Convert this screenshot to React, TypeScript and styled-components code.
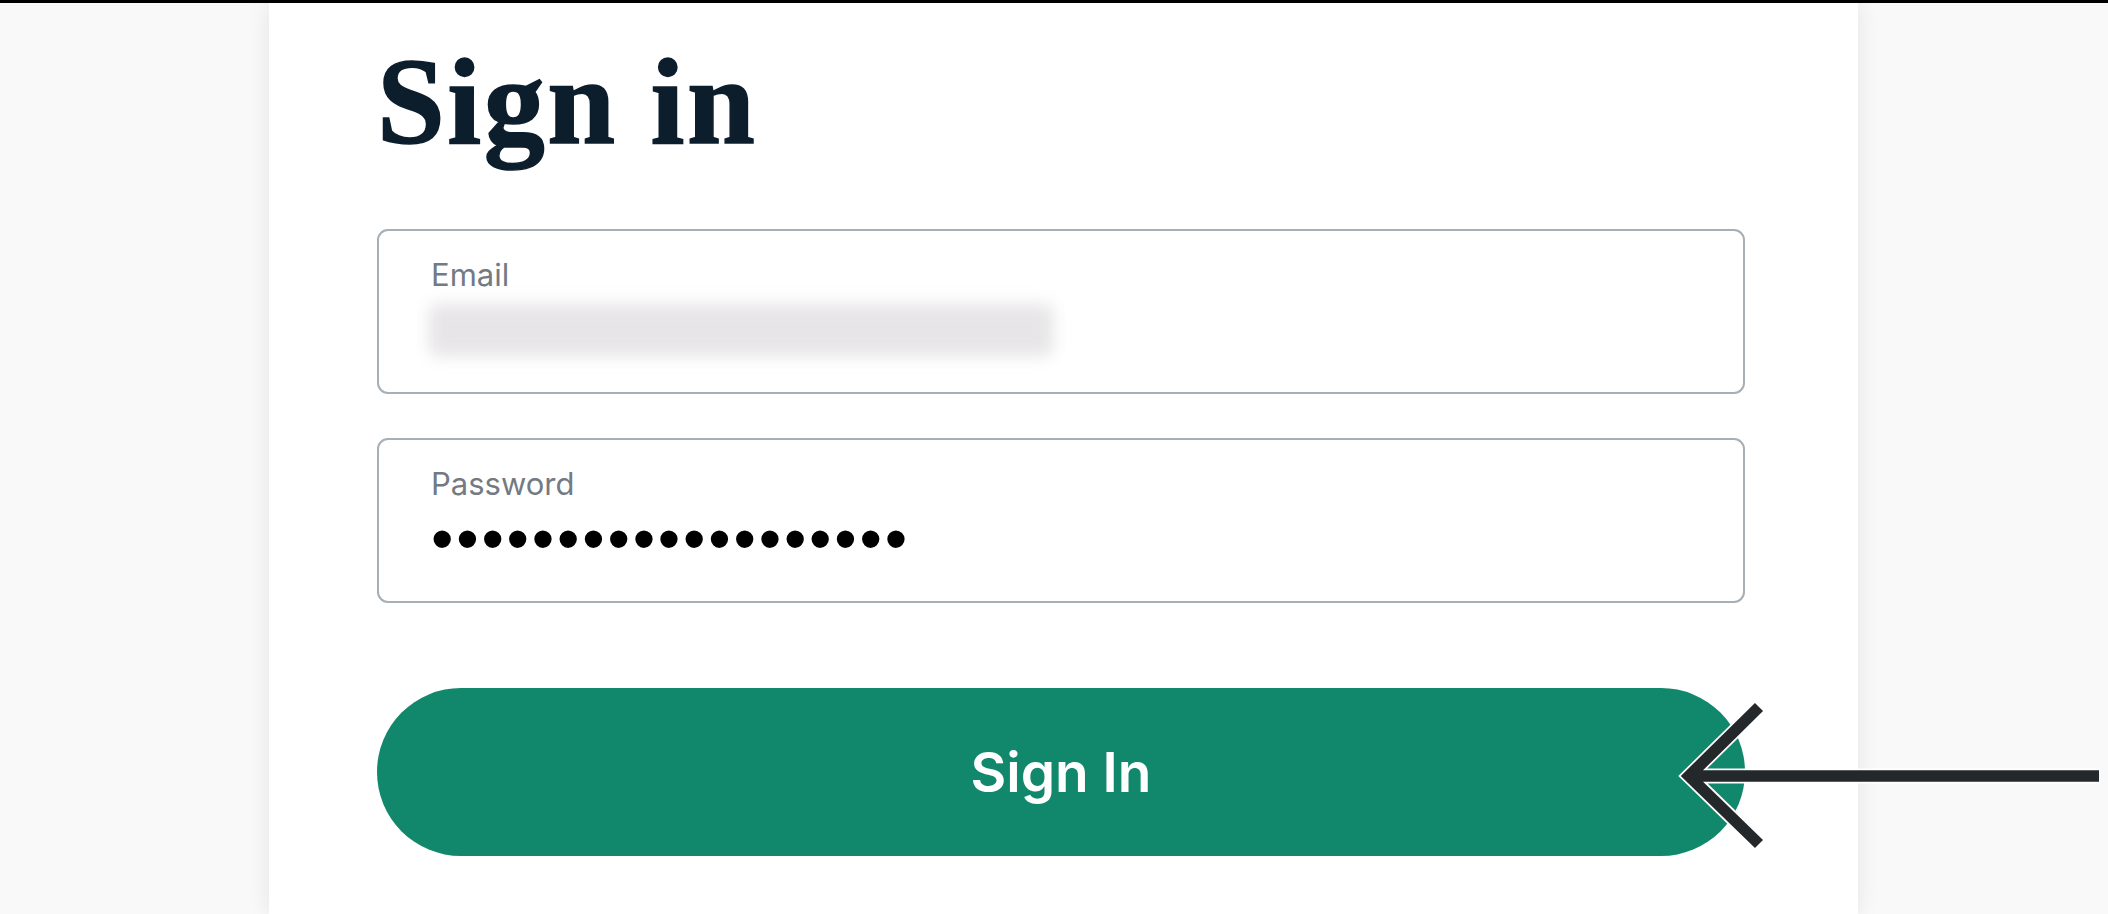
import React from "react";
import styled, { createGlobalStyle } from "styled-components";

const GlobalStyle = createGlobalStyle`
  html, body, #root {
    margin: 0;
    padding: 0;
    height: 100%;
  }
  body {
    background: #f9f9f9;
    font-family: Inter, "Noto Sans", sans-serif;
    overflow: hidden;
  }
`;

const Page = styled.div`
  position: relative;
  height: 100vh;
  display: flex;
  flex-direction: column;
  background: #f9f9f9;
  overflow: hidden;
`;

const TopBar = styled.div`
  height: 3px;
  flex-shrink: 0;
  background: #000;
`;

const Stage = styled.main`
  flex: 1;
  display: flex;
  min-height: 0;
  padding-left: 269px;
`;

const Card = styled.section`
  width: 1589px;
  box-sizing: border-box;
  background: #fff;
  box-shadow: 0 0 22px rgba(0, 0, 0, 0.09);
  padding: 38px 113px 0 108px;
  display: flex;
  flex-direction: column;
`;

const Title = styled.h1`
  margin: 0;
  font-family: "Liberation Serif", "Times New Roman", serif;
  font-weight: 700;
  font-size: 122px;
  line-height: 122px;
  letter-spacing: 2.5px;
  color: #0c1d2c;
  -webkit-text-stroke: 1.5px #0c1d2c;
`;

const Form = styled.form`
  display: flex;
  flex-direction: column;
  gap: 44px;
  margin-top: 66px;
`;

const Field = styled.label`
  display: flex;
  flex-direction: column;
  height: 165px;
  box-sizing: border-box;
  border: 2px solid #a6aeb6;
  border-radius: 11px;
  padding: 25px 52px 0;
`;

const FieldLabel = styled.span`
  font-family: Inter, "Noto Sans", sans-serif;
  font-size: 31px;
  line-height: 37px;
  color: #737a83;
`;

const ValueRow = styled.div`
  height: 40px;
  margin-top: 17px;
  display: flex;
  align-items: center;
`;

const BlurredValue = styled.div`
  width: 624px;
  height: 52px;
  margin-left: -2px;
  border-radius: 8px;
  background: #e7e5e7;
  filter: blur(8px);
`;

const Mask = styled.span`
  font-family: "Liberation Sans", Arial, sans-serif;
  font-size: 64px;
  line-height: 40px;
  letter-spacing: 2.8px;
  color: #000;
`;

const SubmitButton = styled.button`
  margin-top: 41px;
  height: 168px;
  border: none;
  border-radius: 84px;
  background: #11876c;
  color: #fff;
  font-family: Inter, "Noto Sans", sans-serif;
  font-weight: 600;
  font-size: 55px;
  cursor: pointer;
`;

const Annotation = styled.svg`
  position: absolute;
  left: 1670px;
  top: 700px;
  overflow: visible;
  pointer-events: none;
`;

export default function App() {
  const arrow = "M89 7 L19 76 L89 144 M19 76 H429";
  return (
    <>
      <GlobalStyle />
      <Page>
        <TopBar />
        <Stage>
          <Card>
            <Title>Sign in</Title>
            <Form onSubmit={(e) => e.preventDefault()}>
              <Field>
                <FieldLabel>Email</FieldLabel>
                <ValueRow>
                  <BlurredValue />
                </ValueRow>
              </Field>
              <Field>
                <FieldLabel>Password</FieldLabel>
                <ValueRow>
                  <Mask>{"•".repeat(19)}</Mask>
                </ValueRow>
              </Field>
              <SubmitButton type="submit">Sign In</SubmitButton>
            </Form>
          </Card>
        </Stage>
        <Annotation width="438" height="150" viewBox="0 0 438 150">
          <g fill="none" strokeLinejoin="miter" strokeMiterlimit={10}>
            <path d={arrow} stroke="#fff" strokeWidth="15" />
            <path d={arrow} stroke="#25282b" strokeWidth="11.5" />
          </g>
        </Annotation>
      </Page>
    </>
  );
}
